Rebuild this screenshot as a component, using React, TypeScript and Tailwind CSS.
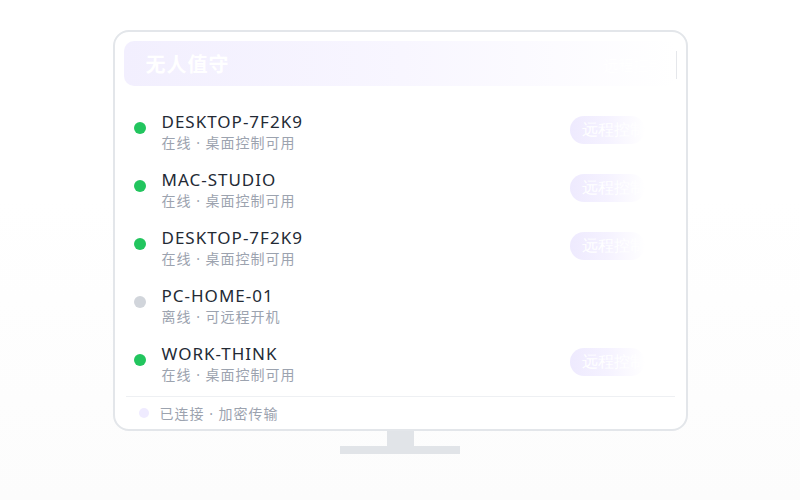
import React from 'react';

interface Device {
  name: string;
  status: string;
  online: boolean;
}

const devices: Device[] = [
  { name: 'DESKTOP-7F2K9', status: '在线 · 桌面控制可用', online: true },
  { name: 'MAC-STUDIO', status: '在线 · 桌面控制可用', online: true },
  { name: 'DESKTOP-7F2K9', status: '在线 · 桌面控制可用', online: true },
  { name: 'PC-HOME-01', status: '离线 · 可远程开机', online: false },
  { name: 'WORK-THINK', status: '在线 · 桌面控制可用', online: true },
];

const DeviceRow: React.FC<{ device: Device }> = ({ device }) => (
  <div className="flex items-start h-[58px] pt-[7px] pl-[10px]">
    <span
      className={`mt-[11px] w-3 h-3 rounded-full shrink-0 ${device.online ? 'bg-[#22c55e]' : 'bg-[#d1d5db]'}`}
    />
    <div className="ml-4 flex flex-col">
      <span className="text-[17px] leading-[22px] tracking-[1px] text-[#232a35]">{device.name}</span>
      <span className="text-[14px] leading-[20px] tracking-[1px] text-[#9ca3af]">{device.status}</span>
    </div>
    {device.online && (
      <div className="ml-auto mr-8 mt-[5px] w-[75px] h-7 rounded-full bg-gradient-to-r from-[#eeeafe] via-[#f5f2ff] to-white flex items-center pl-3 overflow-hidden">
        <span className="text-[16px] leading-none text-white whitespace-nowrap font-serif">远程控制</span>
      </div>
    )}
  </div>
);

export default function App() {
  return (
    <div
      className="w-[800px] h-[500px] bg-gradient-to-b from-white from-40% to-[#fcfcfc] pt-[30px]"
      style={{ fontFamily: '"Noto Sans", "Noto Sans CJK SC", sans-serif' }}
    >
      {/* Monitor */}
      <div className="mx-auto w-[575px] h-[401px] border-2 border-[#e3e6ea] rounded-2xl bg-white flex flex-col px-[9px] pt-[9px]">
        {/* Header */}
        <div className="h-[45px] rounded-[10px] bg-gradient-to-r from-[#f2effe] via-[#f8f6ff] to-white flex items-center pl-[22px] pt-[3px] shrink-0">
          <span className="text-[20px] font-bold text-white tracking-[1px]">无人值守</span>
          <span className="ml-auto mr-3 text-[15px] text-white">远程控制</span>
          <span className="w-px h-7 bg-[#e5e7eb]" />
        </div>

        {/* Device list */}
        <div className="mt-[18px] flex flex-col">
          {devices.map((d, i) => (
            <DeviceRow key={i} device={d} />
          ))}
        </div>

        {/* Footer */}
        <div className="mt-[2px] mx-[2px] border-t border-[#eef0f3] flex-1 flex items-center pl-[13px]">
          <span className="w-[10px] h-[10px] rounded-full bg-[#efebff]" />
          <span className="ml-[11px] text-[14px] tracking-[1px] text-[#9ca3af]">已连接 · 加密传输</span>
        </div>
      </div>

      {/* Stand */}
      <div className="flex flex-col items-center">
        <div className="w-[27px] h-[15px] bg-[#e1e4e8]" />
        <div className="w-[120px] h-2 bg-[#e1e4e8]" />
      </div>
    </div>
  );
}
